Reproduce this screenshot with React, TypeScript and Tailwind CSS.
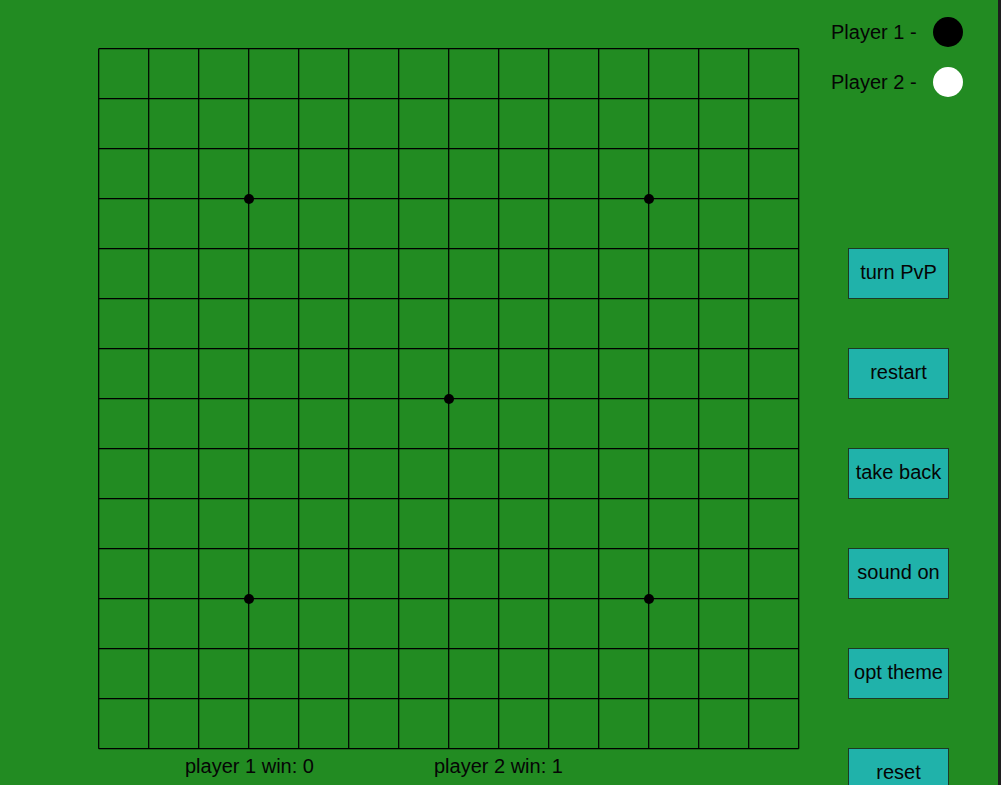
import React from "react";

const N = 14;
const CELL = 50;

function Board() {
  const lines: React.ReactNode[] = [];
  for (let i = 0; i <= N; i++) {
    const p = 0.7 + i * CELL;
    lines.push(<line key={"v" + i} x1={p} y1={0.7} x2={p} y2={0.7 + N * CELL} stroke="#000" strokeWidth={1.2} />);
    lines.push(<line key={"h" + i} x1={0.7} y1={p} x2={0.7 + N * CELL} y2={p} stroke="#000" strokeWidth={1.2} />);
  }
  const stars = [
    [3, 3],
    [11, 3],
    [7, 7],
    [3, 11],
    [11, 11],
  ];
  return (
    <svg width={702} height={702} viewBox="0 0 702 702" className="block">
      {lines}
      {stars.map(([x, y], i) => (
        <circle key={i} cx={1 + x * CELL} cy={1 + y * CELL} r={5} fill="#000" />
      ))}
    </svg>
  );
}

const buttons = ["turn PvP", "restart", "take back", "sound on", "opt theme", "reset"];

export default function App() {
  return (
    <div className="w-[1001px] h-[785px] bg-[#228B22] flex overflow-hidden font-['Liberation_Sans',Arial,sans-serif] text-[20px] text-[#050505]">
      <div className="pl-[98px] pt-[48px] flex flex-col shrink-0">
        <Board />
        <div className="flex mt-[5px] leading-[23px] pl-[87px] gap-[120px]">
          <span>player 1 win: 0</span>
          <span>player 2 win: 1</span>
        </div>
      </div>
      <div className="ml-[31px] pt-[17px] flex flex-col shrink-0">
        <div className="flex items-center h-[30px]">
          <span className="w-[102px]">Player 1 -</span>
          <div className="w-[30px] h-[30px] rounded-full bg-black" />
        </div>
        <div className="flex items-center h-[30px] mt-[20px]">
          <span className="w-[102px]">Player 2 -</span>
          <div className="w-[30px] h-[30px] rounded-full bg-white" />
        </div>
        <div className="flex flex-col gap-[49px] mt-[151px] ml-[17px]">
          {buttons.map((b) => (
            <button
              key={b}
              className="w-[101px] h-[51px] shrink-0 bg-[#20B2AA] border border-[#1c3a24] text-[20px] text-[#050505] flex items-center justify-center pb-[3px]"
            >
              {b}
            </button>
          ))}
        </div>
      </div>
      <div className="ml-auto w-[3px] h-full bg-[#1e1e1e] shrink-0" />
    </div>
  );
}
